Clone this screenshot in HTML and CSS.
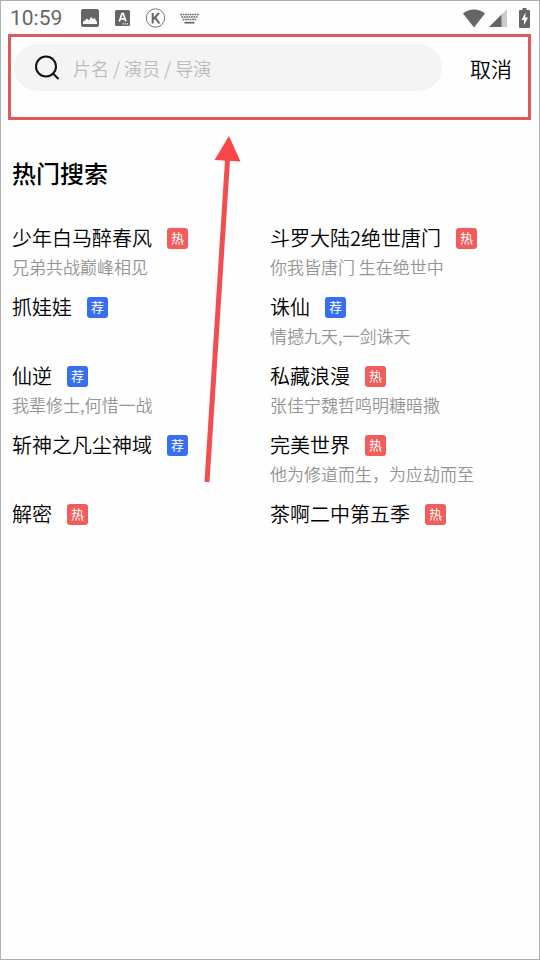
FILE: index.html
```html
<!DOCTYPE html>
<html lang="zh-CN">
<head>
<meta charset="utf-8">
<meta name="viewport" content="width=device-width, initial-scale=1">
<title>热门搜索</title>
<link rel="stylesheet" href="styles.css">
</head>
<body>
<div class="screen">
  <header class="status">
    <span class="clock">10:59</span>
    <div class="status-apps">
      <svg width="18" height="18" viewBox="0 0 18 18"><rect width="18" height="18" rx="2" fill="#666"/><path d="M2 15v-2l4-3.500 2 2 2-3.500 2 2 1.500-1 2.500 4v2z" fill="#fff"/></svg>
      <svg width="16" height="16" viewBox="0 0 16 16"><rect x="1" width="15" height="16" rx="1.500" fill="#666"/><path d="M5.300 11.500 8 3.500h1.200l2.700 8M6.300 8.800h4.600" fill="none" stroke="#fff" stroke-width="1.700"/><path d="M8.500 13.900h1.200M10.700 13.900h1.200M12.900 13.900h1.200" stroke="#fff" stroke-width="1.200"/></svg>
      <svg width="20" height="20" viewBox="0 0 20 20"><circle cx="10.500" cy="10" r="9.200" fill="none" stroke="#777" stroke-width="1"/><path d="M7.700 5v10.500M14 5l-5.700 6.200M10 9.300l4.400 6.200" fill="none" stroke="#666" stroke-width="2"/></svg>
      <svg width="19" height="11" viewBox="0 0 19 11"><g fill="none" stroke="#666" stroke-width="1.700"><path d="M.3 1.500h18.400" stroke-dasharray="1.700 .68"/><path d="M1.500 4h16" stroke-dasharray="1.700 .68"/><path d="M2.600 6.500h14" stroke-dasharray="1.700 .68"/><path d="M4.500 9.700h10"/></g></svg>
    </div>
    <div class="status-system">
      <svg width="22" height="19" viewBox="0 0 22 19"><path d="M0 4.500C6-1 16-1 22 4.500L11 18.500z" fill="#666"/></svg>
      <svg width="18" height="18" viewBox="0 0 18 18"><path d="M12 6 18 0v18h-6z" fill="#ccc"/><path d="M0 18 12.500 5.500V18z" fill="#666"/></svg>
      <svg class="battery" width="11" height="20" viewBox="0 0 11 20"><path d="M3.500 0h4v2H10q1 0 1 1v16q0 1-1 1H1q-1 0-1-1V3q0-1 1-1h2.500z" fill="#666"/><path d="M6.500 4.500 2.500 12H5v5l4-7.500H6.300z" fill="#fff"/></svg>
    </div>
  </header>

  <form class="search">
    <label class="search-field">
      <svg width="26" height="26" viewBox="0 0 26 26" fill="none" stroke="#111" stroke-width="2"><circle cx="12" cy="11.500" r="10"/><path d="m19 18.500 5.500 5.500"/></svg>
      <input type="search" aria-label="搜索" placeholder="片名 / 演员 / 导演">
    </label>
    <button class="cancel" type="button">取消</button>
    <span class="frame"></span>
  </form>

  <main class="hot">
    <h1>热门搜索</h1>
    <ul class="hot-list">
      <li><a href="#"><span class="name">少年白马醉春风</span><span class="tag tag-hot">热</span></a><p>兄弟共战巅峰相见</p></li>
      <li><a href="#"><span class="name">斗罗大陆2绝世唐门</span><span class="tag tag-hot">热</span></a><p>你我皆唐门 生在绝世中</p></li>
      <li><a href="#"><span class="name">抓娃娃</span><span class="tag tag-pick">荐</span></a></li>
      <li><a href="#"><span class="name">诛仙</span><span class="tag tag-pick">荐</span></a><p>情撼九天,一剑诛天</p></li>
      <li><a href="#"><span class="name">仙逆</span><span class="tag tag-pick">荐</span></a><p>我辈修士,何惜一战</p></li>
      <li><a href="#"><span class="name">私藏浪漫</span><span class="tag tag-hot">热</span></a><p>张佳宁魏哲鸣明糖暗撒</p></li>
      <li><a href="#"><span class="name">斩神之凡尘神域</span><span class="tag tag-pick">荐</span></a></li>
      <li><a href="#"><span class="name">完美世界</span><span class="tag tag-hot">热</span></a><p>他为修道而生，为应劫而至</p></li>
      <li><a href="#"><span class="name">解密</span><span class="tag tag-hot">热</span></a></li>
      <li><a href="#"><span class="name">茶啊二中第五季</span><span class="tag tag-hot">热</span></a></li>
    </ul>
  </main>

  <svg class="arrow" width="40" height="350" viewBox="0 0 40 350"><path d="M26.500 24 6 346" stroke="#f04e50" stroke-width="5"/><path d="M28 0 39.500 25.500 13.500 24z" fill="#fb4648"/></svg>
</div>
</body>
</html>
```
FILE: styles.css
```css
* {
  box-sizing: border-box;
}

body {
  margin: 0;
  background: #fefefe;
  color: #000;
  font-family: "Noto Sans CJK SC", sans-serif;
  font-weight: 350;
}

.screen {
  position: relative;
  min-height: 100vh;
  border: 1px solid #b0b0b0;
}

svg {
  display: block;
  flex: none;
}

.status {
  display: flex;
  align-items: center;
  height: 34px;
  padding: 0 9px;
}

.clock {
  color: #666;
  font-family: Roboto, sans-serif;
  font-size: 21px;
  font-weight: 400;
  line-height: 24px;
}

.status-apps {
  display: flex;
  align-items: center;
  gap: 15px;
  margin-left: 19px;
}

.status-system {
  display: flex;
  align-items: center;
  gap: 4px;
  margin-left: auto;
}

.battery {
  margin-left: 8px;
}

.search {
  position: relative;
  display: flex;
  align-items: center;
  height: 84px;
  padding: 9px 27px 28px 13px;
}

.search-field {
  display: flex;
  flex: 1;
  align-items: center;
  gap: 13px;
  height: 47px;
  min-width: 0;
  padding: 0 20px;
  border-radius: 24px;
  background: #f4f4f4;
}

.search-field input {
  flex: 1;
  min-width: 0;
  padding: 0;
  border: 0;
  outline: 0;
  background: none;
  color: inherit;
  font: inherit;
  font-size: 18px;
  line-height: 26px;
}

.search-field input::placeholder {
  color: #bbb;
}

.cancel {
  margin-left: 28px;
  padding: 0;
  border: 0;
  background: none;
  color: inherit;
  font: inherit;
  font-size: 21px;
  line-height: 30px;
}

.frame {
  position: absolute;
  inset: -1px 8px -1px 7px;
  border: 3px solid #e05a5c;
  pointer-events: none;
}

.hot {
  padding: 36px 11px 0;
}

h1 {
  margin: 0;
  font-size: 24px;
  font-weight: 500;
  line-height: 36px;
}

.hot-list {
  display: grid;
  grid-template-columns: 1fr 1fr;
  grid-auto-rows: 69px;
  margin: 32px 0 0;
  padding: 0;
  list-style: none;
}

.hot-list a {
  display: flex;
  align-items: center;
  gap: 15px;
  height: 30px;
  color: inherit;
  font-size: 20px;
  line-height: 32px;
  text-decoration: none;
  white-space: nowrap;
}

.tag {
  width: 21px;
  height: 21px;
  border-radius: 3px;
  color: #fff;
  font-size: 13px;
  font-weight: 400;
  line-height: 19px;
  text-align: center;
}

.tag-hot {
  background: #f25c5a;
}

.tag-pick {
  background: #386ff0;
}

.hot-list p {
  margin: 0;
  color: #949494;
  font-size: 17px;
  line-height: 28px;
  white-space: nowrap;
}

.arrow {
  position: absolute;
  top: 135px;
  left: 200px;
  pointer-events: none;
}
```
